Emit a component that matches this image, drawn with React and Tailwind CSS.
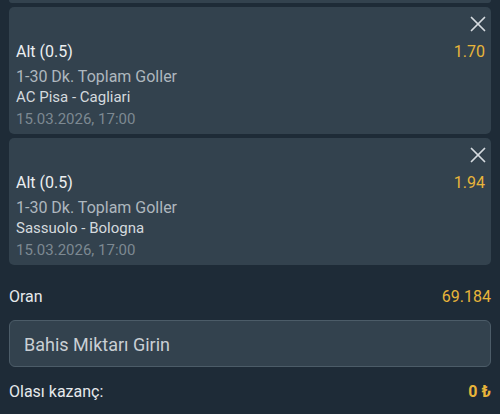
import { X } from "lucide-react";

const bets = [
  { pick: "Alt (0.5)", odd: "1.70", market: "1-30 Dk. Toplam Goller", match: "AC Pisa - Cagliari", date: "15.03.2026, 17:00" },
  { pick: "Alt (0.5)", odd: "1.94", market: "1-30 Dk. Toplam Goller", match: "Sassuolo - Bologna", date: "15.03.2026, 17:00" },
];

function BetCard({ bet }) {
  return (
    <div className="rounded-[5px] bg-[#33424e] pl-[7px] pr-[6px] pt-[9px] pb-[5px]">
      <div className="flex justify-end items-center h-[16px]">
        <button type="button" className="-mr-[6px] text-[#d6dbe0]">
          <X size={26} strokeWidth={1.6} />
        </button>
      </div>
      <div className="mt-[10px] flex items-center justify-between text-[16px] leading-[20px]">
        <span className="text-[#eceff1]">{bet.pick}</span>
        <span className="text-[#e8b53a]">{bet.odd}</span>
      </div>
      <div className="mt-[5px] text-[16px] leading-[20px] text-[#aeb7be]">{bet.market}</div>
      <div className="text-[15px] leading-[20px] text-[#d5dade]">{bet.match}</div>
      <div className="mt-[2px] text-[15px] leading-[20px] text-[#7d8992]">{bet.date}</div>
    </div>
  );
}

export default function App() {
  return (
    <div
      className="w-[500px] h-[414px] overflow-hidden bg-[#1e2b37] px-[9px]"
      style={{ fontFamily: "Roboto, 'Noto Sans', sans-serif" }}
    >
      <div className="h-[3px] rounded-b-[5px] bg-[#33424e]" />
      <div className="mt-[4px] flex flex-col gap-[4px]">
        {bets.map((b, i) => (
          <BetCard key={i} bet={b} />
        ))}
      </div>

      <div className="mt-[21px] flex items-center justify-between text-[16px] leading-[22px]">
        <span className="text-[#e6e9ec]">Oran</span>
        <span className="text-[#e8b53a]">69.184</span>
      </div>

      <div className="mt-[12px] h-[47px] rounded-[6px] border border-[#4c5c68] bg-[#33424e] flex items-center pl-[14px] pt-[2px]">
        <span className="text-[18px] text-[#c9cfd4]">Bahis Miktarı Girin</span>
      </div>

      <div className="mt-[14px] flex items-center justify-between text-[16px] leading-[22px]">
        <span className="text-[#e6e9ec]">Olası kazanç:</span>
        <span className="font-bold text-[#e8b53a]">0 ₺</span>
      </div>
    </div>
  );
}
